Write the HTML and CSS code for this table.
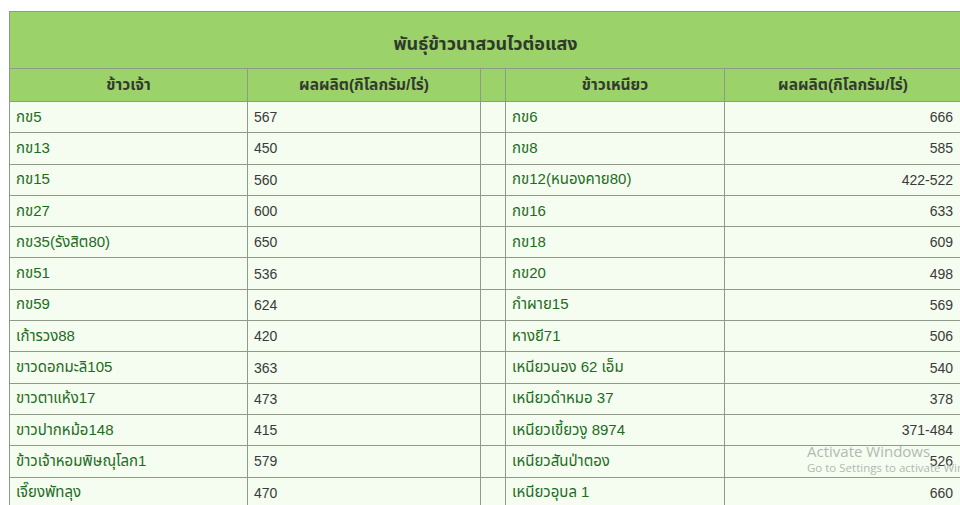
FILE: index.html
```html
<!DOCTYPE html>
<html lang="th">
<head>
<meta charset="utf-8">
<link rel="stylesheet" href="styles.css">
</head>
<body>
<div class="page">
<table class="rice">
  <colgroup>
    <col class="c1"><col class="c2"><col class="cgap"><col class="c3"><col class="c4">
  </colgroup>
  <tr class="title-row"><th colspan="5">พันธุ์ข้าวนาสวนไวต่อแสง</th></tr>
  <tr class="head-row">
    <th>ข้าวเจ้า</th><th>ผลผลิต(กิโลกรัม/ไร่)</th><th class="gap"></th><th>ข้าวเหนียว</th><th>ผลผลิต(กิโลกรัม/ไร่)</th>
  </tr>
  <tr><td class="name">กข5</td><td class="val">567</td><td class="gap"></td><td class="name">กข6</td><td class="val r">666</td></tr>
  <tr><td class="name">กข13</td><td class="val">450</td><td class="gap"></td><td class="name">กข8</td><td class="val r">585</td></tr>
  <tr><td class="name">กข15</td><td class="val">560</td><td class="gap"></td><td class="name">กข12(หนองคาย80)</td><td class="val r">422-522</td></tr>
  <tr><td class="name">กข27</td><td class="val">600</td><td class="gap"></td><td class="name">กข16</td><td class="val r">633</td></tr>
  <tr><td class="name">กข35(รังสิต80)</td><td class="val">650</td><td class="gap"></td><td class="name">กข18</td><td class="val r">609</td></tr>
  <tr><td class="name">กข51</td><td class="val">536</td><td class="gap"></td><td class="name">กข20</td><td class="val r">498</td></tr>
  <tr><td class="name">กข59</td><td class="val">624</td><td class="gap"></td><td class="name">กำผาย15</td><td class="val r">569</td></tr>
  <tr><td class="name">เก้ารวง88</td><td class="val">420</td><td class="gap"></td><td class="name">หางยี71</td><td class="val r">506</td></tr>
  <tr><td class="name">ขาวดอกมะลิ105</td><td class="val">363</td><td class="gap"></td><td class="name">เหนียวนอง 62 เอ็ม</td><td class="val r">540</td></tr>
  <tr><td class="name">ขาวตาแห้ง17</td><td class="val">473</td><td class="gap"></td><td class="name">เหนียวดำหมอ 37</td><td class="val r">378</td></tr>
  <tr><td class="name">ขาวปากหม้อ148</td><td class="val">415</td><td class="gap"></td><td class="name">เหนียวเขี้ยวงู 8974</td><td class="val r">371-484</td></tr>
  <tr><td class="name">ข้าวเจ้าหอมพิษณุโลก1</td><td class="val">579</td><td class="gap"></td><td class="name">เหนียวสันป่าตอง</td><td class="val r">526</td></tr>
  <tr><td class="name">เจี๊ยงพัทลุง</td><td class="val">470</td><td class="gap"></td><td class="name">เหนียวอุบล 1</td><td class="val r">660</td></tr>
</table>
<div class="activate">
  <div class="act-title">Activate Windows</div>
  <div class="act-sub">Go to Settings to activate Windows.</div>
</div>
</div>
</body>
</html>
```
FILE: styles.css
```css
html, body {
  margin: 0;
  padding: 0;
  background: #ffffff;
  overflow: hidden;
}
.page {
  padding: 11px 0 0 9px;
  width: 960px;
  height: 505px;
  box-sizing: border-box;
  overflow: hidden;
  font-family: "Liberation Sans", Arial, "Noto Sans Thai", "DejaVu Sans", sans-serif;
  font-size: 14px;
}
.rice {
  border-collapse: collapse;
  table-layout: fixed;
  width: 952px;
}
.c1 { width: 238px; }
.c2 { width: 233px; }
.cgap { width: 25px; }
.c3 { width: 219px; }
.c4 { width: 237px; }
.rice th, .rice td {
  border: 1px solid #8f9a88;
  padding: 0 6px;
  white-space: nowrap;
}
.title-row th {
  background: #9bd26a;
  height: 57px;
  font-size: 18px;
  font-weight: bold;
  color: #2f3a2a;
  text-align: center;
  vertical-align: middle;
  padding-top: 8px;
  box-sizing: border-box;
}
.head-row th {
  background: #9bd26a;
  height: 32px;
  font-size: 15.5px;
  font-weight: bold;
  color: #333a30;
  text-align: center;
}
.rice td {
  background: #f4fdf0;
  height: 31.3px;
  box-sizing: border-box;
}
.name {
  color: #1d6b1d;
  font-size: 15px;
}
.val {
  color: #3a3a3a;
}
.val.r {
  text-align: right;
  padding-right: 8px;
}
.activate {
  position: absolute;
  left: 807px;
  top: 442px;
  color: #b3b8b0;
  font-family: "Open Sans", "Noto Sans", sans-serif;
  white-space: nowrap;
}
.act-title {
  font-size: 15px;
  line-height: 18px;
}
.act-sub {
  font-size: 11.5px;
  line-height: 16px;
}
```
